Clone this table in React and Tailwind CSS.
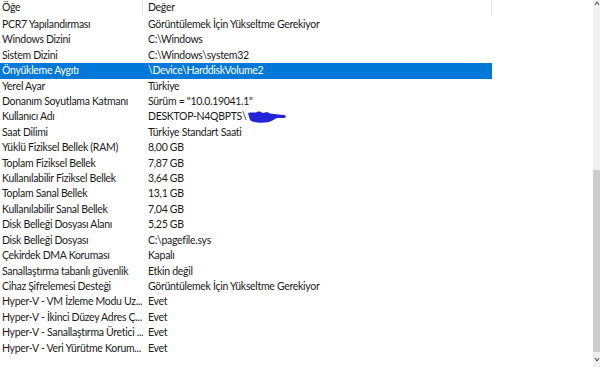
import React from 'react';

const rows = [
  ['PCR7 Yapılandırması', 'Görüntülemek İçin Yükseltme Gerekiyor'],
  ['Windows Dizini', 'C:\\Windows'],
  ['Sistem Dizini', 'C:\\Windows\\system32'],
  ['Önyükleme Aygıtı', '\\Device\\HarddiskVolume2', true],
  ['Yerel Ayar', 'Türkiye'],
  ['Donanım Soyutlama Katmanı', 'Sürüm = "10.0.19041.1"'],
  ['Kullanıcı Adı', 'DESKTOP-N4QBPTS\\', false, true],
  ['Saat Dilimi', 'Türkiye Standart Saati'],
  ['Yüklü Fiziksel Bellek (RAM)', '8,00 GB'],
  ['Toplam Fiziksel Bellek', '7,87 GB'],
  ['Kullanılabilir Fiziksel Bellek', '3,64 GB'],
  ['Toplam Sanal Bellek', '13,1 GB'],
  ['Kullanılabilir Sanal Bellek', '7,04 GB'],
  ['Disk Belleği Dosyası Alanı', '5,25 GB'],
  ['Disk Belleği Dosyası', 'C:\\pagefile.sys'],
  ['Çekirdek DMA Koruması', 'Kapalı'],
  ['Sanallaştırma tabanlı güvenlik', 'Etkin değil'],
  ['Cihaz Şifrelemesi Desteği', 'Görüntülemek İçin Yükseltme Gerekiyor'],
  ['Hyper-V - VM İzleme Modu Uz...', 'Evet'],
  ['Hyper-V - İkinci Düzey Adres Ç...', 'Evet'],
  ['Hyper-V - Sanallaştırma Üretici ...', 'Evet'],
  ['Hyper-V - Veri Yürütme Korum...', 'Evet'],
];

// blue marker scribble hiding the user name
const Scribble = () => (
  <svg width="40" height="14" viewBox="0 0 40 14" className="ml-[1px]">
    <path
      d="M1 3 C4 2 8 3 10 2 C12 1 14 2 16 3 L20 2 C22 3 24 4 27 4 L36 5 C39 5 40 7 37 8 L30 8 C27 9 26 11 22 12 C16 13 8 13 4 11 C2 9 2 6 1 3 Z"
      fill="#2323d8"
    />
  </svg>
);

export default function App() {
  return (
    <div
      className="w-[600px] h-[367px] bg-white flex overflow-hidden text-[10.5px] tracking-[-0.3px] text-[#1a1a1a]"
      style={{ fontFamily: 'Lato, "Liberation Sans", sans-serif' }}
    >
      <div className="flex-1 flex flex-col">
        <div className="h-[16px] flex items-center">
          <div className="w-[143px] pl-[2px] border-r border-[#e5e5e5] h-full flex items-center">Öğe</div>
          <div className="w-[349px] pl-[5px] border-r border-[#e5e5e5] h-full flex items-center">Değer</div>
        </div>
        <div className="pt-[1px]">
          {rows.map(([name, value, selected, scribble]) => (
            <div
              key={name}
              className={`h-[15.43px] flex items-center w-[492px] whitespace-nowrap ${selected ? 'bg-[#0078d7] text-white' : ''}`}
            >
              <div className="w-[143px] pl-[2px] overflow-hidden">{name}</div>
              <div className="pl-[5px] flex items-center">
                {value}
                {scribble && <Scribble />}
              </div>
            </div>
          ))}
        </div>
      </div>
      <div className="w-[7px] bg-[#f0f0f0] flex flex-col">
        <div className="h-[10px] flex items-start justify-end">
          <svg width="6" height="6" viewBox="0 0 6 6">
            <path d="M1 5 L3 2 L5 5" stroke="#606060" strokeWidth="1.2" fill="none" />
          </svg>
        </div>
        <div className="h-[160px]" />
        <div className="flex-1 bg-[#cdcdcd]" />
        <div className="h-[15px] flex items-center justify-end">
          <svg width="6" height="6" viewBox="0 0 6 6">
            <path d="M1 1 L3 4 L5 1" stroke="#606060" strokeWidth="1.2" fill="none" />
          </svg>
        </div>
      </div>
    </div>
  );
}
